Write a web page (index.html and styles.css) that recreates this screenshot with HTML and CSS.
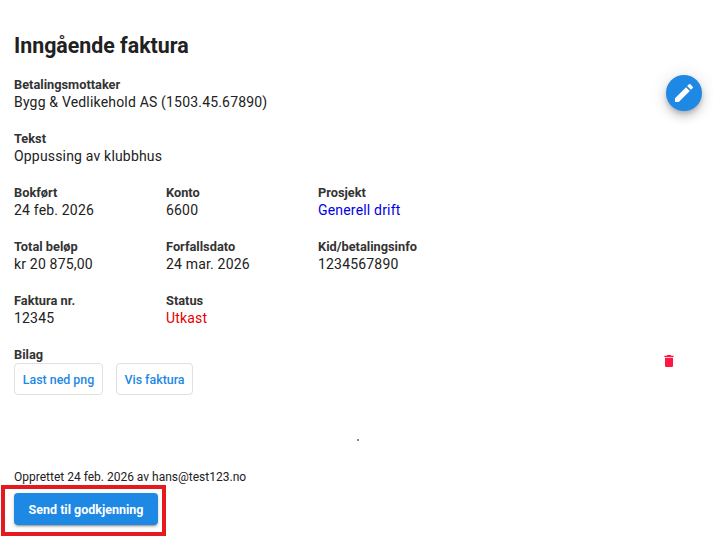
FILE: index.html
```html
<!DOCTYPE html>
<html lang="no">
<head>
<meta charset="utf-8">
<title>Inngående faktura</title>
<link rel="stylesheet" href="styles.css">
</head>
<body>
<main class="page">
  <h1 class="title">Inngående faktura</h1>
  <button class="fab" aria-label="Rediger">
    <svg viewBox="0 0 24 24" width="24" height="24"><path d="M3 17.25V21h3.75L17.81 9.94l-3.75-3.75L3 17.25zM20.71 7.04a1 1 0 0 0 0-1.41l-2.34-2.34a1 1 0 0 0-1.41 0l-1.83 1.83 3.75 3.75 1.83-1.83z"/></svg>
  </button>
  <div class="row">
    <div class="field"><div class="label">Betalingsmottaker</div><div class="value">Bygg &amp; Vedlikehold AS (1503.45.67890)</div></div>
  </div>
  <div class="row">
    <div class="field"><div class="label">Tekst</div><div class="value">Oppussing av klubbhus</div></div>
  </div>
  <div class="row">
    <div class="field col"><div class="label">Bokført</div><div class="value">24 feb. 2026</div></div>
    <div class="field col"><div class="label">Konto</div><div class="value">6600</div></div>
    <div class="field col"><div class="label">Prosjekt</div><div class="value link">Generell drift</div></div>
  </div>
  <div class="row">
    <div class="field col"><div class="label">Total beløp</div><div class="value">kr 20 875,00</div></div>
    <div class="field col"><div class="label">Forfallsdato</div><div class="value">24 mar. 2026</div></div>
    <div class="field col"><div class="label">Kid/betalingsinfo</div><div class="value">1234567890</div></div>
  </div>
  <div class="row">
    <div class="field col"><div class="label">Faktura nr.</div><div class="value">12345</div></div>
    <div class="field col"><div class="label">Status</div><div class="value danger">Utkast</div></div>
  </div>
  <div class="attachments">
    <div class="label">Bilag</div>
    <div class="attachment-row">
      <div class="attachment-buttons">
        <button class="btn-outline">Last ned png</button>
        <button class="btn-outline">Vis faktura</button>
      </div>
      <button class="trash" aria-label="Slett">
        <svg viewBox="0 0 24 24" width="16" height="16"><path d="M6 19c0 1.1.9 2 2 2h8c1.100 0 2-.9 2-2V7H6v12zM19 4h-3.500l-1-1h-5l-1 1H5v2h14V4z"/></svg>
      </button>
    </div>
  </div>
  <div class="divider"><span class="dot"></span></div>
  <p class="created">Opprettet 24 feb. 2026 av hans@test123.no</p>
  <div class="actions">
    <button class="btn-primary">Send til godkjenning</button>
    <span class="highlight"></span>
  </div>
</main>
</body>
</html>
```
FILE: styles.css
```css
* { box-sizing: border-box; }
html, body { margin: 0; padding: 0; background: #fff; }
body {
  font-family: Roboto, "Liberation Sans", sans-serif;
  color: #212121;
  overflow: hidden;
}
.page {
  position: relative;
  width: 713px;
  height: 537px;
  padding: 31px 14px 0;
  overflow: hidden;
}
.title {
  margin: 0 0 16px;
  font-size: 21.35px;
  line-height: 30px;
  font-weight: 700;
  color: #212121;
}
.fab {
  position: absolute;
  left: 666px;
  top: 75px;
  width: 36px;
  height: 36px;
  padding: 0;
  border: 0;
  border-radius: 50%;
  background: #1e88e5;
  display: flex;
  align-items: center;
  justify-content: center;
  box-shadow: 0 3px 5px -1px rgba(0,0,0,.2), 0 6px 10px 0 rgba(0,0,0,.14), 0 1px 18px 0 rgba(0,0,0,.12);
}
.fab svg { fill: #fff; }
.row { display: flex; height: 54px; }
.field { font-size: 14px; }
.col { width: 152px; }
.label {
  font-size: 12.8px;
  line-height: 16px;
  font-weight: 700;
  color: #333;
}
.value { font-size: 14px; line-height: 19px; letter-spacing: .18px; }
.link { color: #0000e6; }
.danger { color: #e60000; }
.attachment-row {
  display: flex;
  justify-content: space-between;
  align-items: flex-start;
}
.attachment-buttons { display: flex; gap: 13px; }
.btn-outline {
  width: 89px;
  height: 32px;
  padding: 0;
  border: 1px solid #e0e0e0;
  border-radius: 4px;
  background: #fff;
  color: #1e88e5;
  font: 500 12.4px Roboto, sans-serif;
}
.btn-outline + .btn-outline { width: 77px; }
.trash {
  margin: -10px 22px 0 0;
  padding: 0;
  width: 16px;
  height: 16px;
  border: 0;
  background: none;
}
.trash svg { display: block; fill: #ff1744; }
.divider { height: 74px; position: relative; }
.dot {
  position: absolute;
  left: 343px;
  top: 44px;
  width: 2px;
  height: 2px;
  background: #888;
}
.created {
  margin: 0;
  font-size: 12px;
  line-height: 16px;
}
.actions { position: relative; margin-top: 8px; width: 144px; }
.btn-primary {
  display: block;
  width: 144px;
  height: 32px;
  padding: 0;
  border: 0;
  border-radius: 4px;
  background: #1e88e5;
  color: #fff;
  font: 700 12.5px Roboto, sans-serif;
  box-shadow: 0 3px 1px -2px rgba(0,0,0,.2), 0 2px 2px 0 rgba(0,0,0,.14), 0 1px 5px 0 rgba(0,0,0,.12);
}
.highlight {
  position: absolute;
  left: -13px;
  top: -8px;
  right: -8px;
  bottom: -11px;
  border: 4px solid #e51a1f;
  pointer-events: none;
}
```
